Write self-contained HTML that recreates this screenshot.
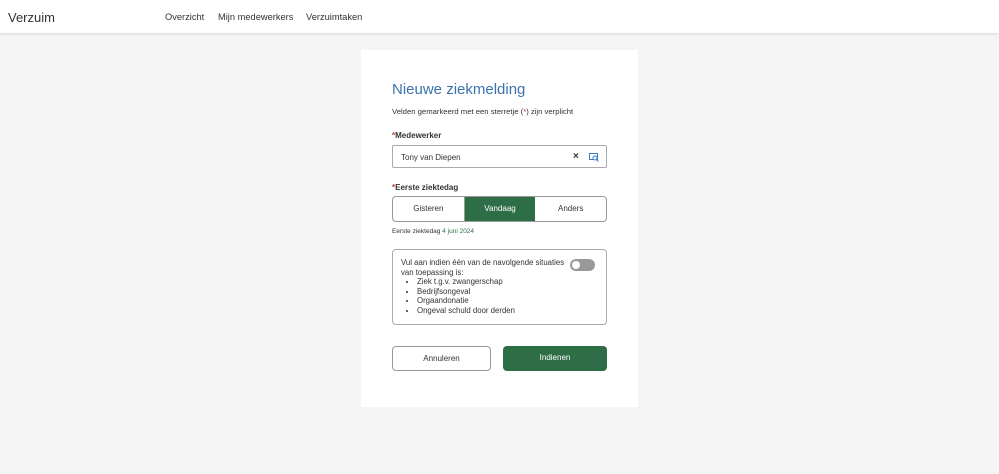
<!DOCTYPE html>
<html><head><meta charset="utf-8"><style>
*{box-sizing:border-box;margin:0;padding:0}
body{width:999px;height:474px;background:#f5f5f5;font-family:"Liberation Sans",sans-serif;color:#333;position:relative;overflow:hidden}
.hdr{position:absolute;left:0;top:0;width:999px;height:33px;background:#fff;box-shadow:0 1px 3px rgba(0,0,0,.12)}
.hdr .logo{position:absolute;left:8px;top:10px;font-size:13px;color:#333}
.hdr .nav{position:absolute;top:12px;font-size:9.3px;color:#333}
.card{position:absolute;left:361px;top:50px;width:277px;height:357px;background:#fff}
.abs{position:absolute}
h1{position:absolute;left:31px;top:31px;font-size:15px;font-weight:normal;color:#3a73ac}
.sm{font-size:7.7px}
.lbl{font-size:8px;font-weight:bold;color:#333}
.req{color:#c0392b}
.input{left:31px;top:95px;width:215px;height:23px;border:1px solid #aaa;border-radius:2px;font-size:8px;padding:7px 8px}
.seg{left:31px;top:146px;width:215px;height:26px;border:1px solid #999;border-radius:4px;display:flex;overflow:hidden;font-size:8px}
.seg div{flex:1;text-align:center;line-height:24px}
.seg .on{background:#2d6e46;color:#fff}
.box{left:31px;top:199px;width:215px;height:76px;border:1px solid #aaa;border-radius:4px;font-size:7.8px;padding:8px 0 0 8px;line-height:9.5px}
.btn{top:296px;height:25px;border-radius:4px;font-size:8px;text-align:center;line-height:23px}
</style></head><body>
<div class="hdr"><span class="logo">Verzuim</span>
<span class="nav" style="left:165px">Overzicht</span>
<span class="nav" style="left:218px">Mijn medewerkers</span>
<span class="nav" style="left:306px">Verzuimtaken</span></div>
<div class="card">
<h1>Nieuwe ziekmelding</h1>
<div class="abs sm" style="left:31px;top:57px">Velden gemarkeerd met een sterretje (<span class="req">*</span>) zijn verplicht</div>
<div class="abs lbl" style="left:31px;top:81px"><span class="req">*</span>Medewerker</div>
<div class="abs input">Tony van Diepen
<span class="abs" style="left:180px;top:5px;font-size:10px;font-weight:bold">×</span>
<svg class="abs" style="left:196px;top:7px" width="10" height="9" viewBox="0 0 10 9"><rect x="0.5" y="0.5" width="8" height="6" fill="none" stroke="#3a7bc8"/><circle cx="6" cy="5" r="2" fill="#fff" stroke="#3a7bc8"/><line x1="7.5" y1="6.5" x2="9.5" y2="8.5" stroke="#3a7bc8"/></svg></div>
<div class="abs lbl" style="left:31px;top:133px"><span class="req">*</span>Eerste ziektedag</div>
<div class="abs seg"><div style="border-right:1px solid #999">Gisteren</div><div class="on">Vandaag</div><div>Anders</div></div>
<div class="abs" style="left:31px;top:178px;font-size:6.5px">Eerste ziektedag <span style="color:#2d6e46">4 juni 2024</span></div>
<div class="abs box">Vul aan indien één van de navolgende situaties<br>van toepassing is:
<ul style="margin-left:16px">
<li>Ziek t.g.v. zwangerschap</li><li>Bedrijfsongeval</li><li>Orgaandonatie</li><li>Ongeval schuld door derden</li></ul>
<div class="abs" style="left:177px;top:9px;width:25px;height:12px;border-radius:6px;background:#999"><div class="abs" style="left:2px;top:2px;width:8px;height:8px;border-radius:50%;background:#fff"></div></div>
</div>
<div class="abs btn" style="left:31px;width:99px;border:1px solid #999">Annuleren</div>
<div class="abs btn" style="left:142px;width:104px;background:#2d6e46;color:#fff">Indienen</div>
</div>
</body></html>
